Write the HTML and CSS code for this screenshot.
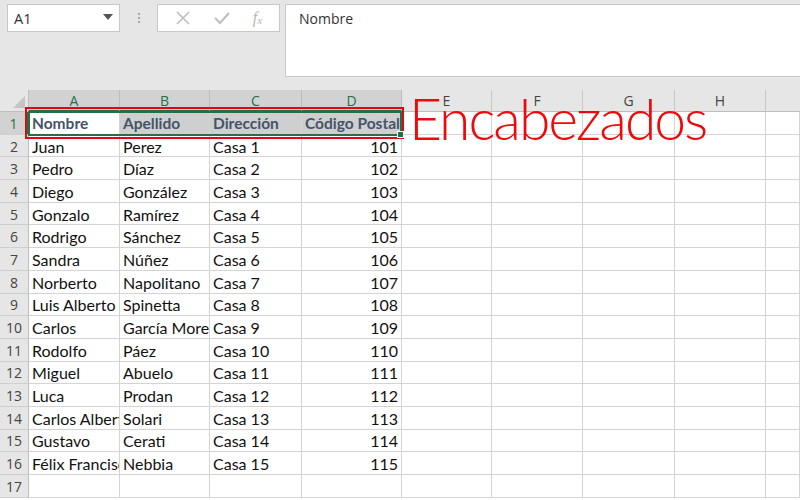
FILE: index.html
```html
<!DOCTYPE html>
<html lang="es">
<head>
<meta charset="utf-8">
<title>Encabezados</title>
<link rel="stylesheet" href="styles.css">
</head>
<body>
<div class="topbar">
  <div class="namebox"><span>A1</span><svg class="caret" width="10" height="6" viewBox="0 0 10 6"><path d="M0 0H10L5 6Z" fill="#555"/></svg></div>
  <div class="dots"><i></i><i></i><i></i></div>
  <div class="fxbox">
    <svg width="16" height="16" viewBox="0 0 16 16"><path d="M2 2L14 14M14 2L2 14" stroke="#bdbdbd" stroke-width="1.6" fill="none"/></svg>
    <svg width="18" height="16" viewBox="0 0 18 16"><path d="M2 8L7 13L16 3" stroke="#bdbdbd" stroke-width="2" fill="none"/></svg>
    <span class="fx">f<sub>x</sub></span>
  </div>
  <div class="formula">Nombre</div>
</div>
<div class="sheet">
  <div class="corner"></div><div class="ch sel">A</div><div class="ch sel">B</div><div class="ch sel">C</div><div class="ch sel">D</div><div class="ch">E</div><div class="ch">F</div><div class="ch">G</div><div class="ch">H</div><div class="ch last"></div>

  <div class="rh selr">1</div><div class="c h act">Nombre</div><div class="c h hs">Apellido</div><div class="c h hs">Dirección</div><div class="c h hs">Código Postal</div><div class="c"></div><div class="c"></div><div class="c"></div><div class="c"></div><div class="c"></div>
  <div class="rh">2</div><div class="c">Juan</div><div class="c">Perez</div><div class="c">Casa 1</div><div class="c n">101</div><div class="c"></div><div class="c"></div><div class="c"></div><div class="c"></div><div class="c"></div>
  <div class="rh">3</div><div class="c">Pedro</div><div class="c">Díaz</div><div class="c">Casa 2</div><div class="c n">102</div><div class="c"></div><div class="c"></div><div class="c"></div><div class="c"></div><div class="c"></div>
  <div class="rh">4</div><div class="c">Diego</div><div class="c">González</div><div class="c">Casa 3</div><div class="c n">103</div><div class="c"></div><div class="c"></div><div class="c"></div><div class="c"></div><div class="c"></div>
  <div class="rh">5</div><div class="c">Gonzalo</div><div class="c">Ramírez</div><div class="c">Casa 4</div><div class="c n">104</div><div class="c"></div><div class="c"></div><div class="c"></div><div class="c"></div><div class="c"></div>
  <div class="rh">6</div><div class="c">Rodrigo</div><div class="c">Sánchez</div><div class="c">Casa 5</div><div class="c n">105</div><div class="c"></div><div class="c"></div><div class="c"></div><div class="c"></div><div class="c"></div>
  <div class="rh">7</div><div class="c">Sandra</div><div class="c">Núñez</div><div class="c">Casa 6</div><div class="c n">106</div><div class="c"></div><div class="c"></div><div class="c"></div><div class="c"></div><div class="c"></div>
  <div class="rh">8</div><div class="c">Norberto</div><div class="c">Napolitano</div><div class="c">Casa 7</div><div class="c n">107</div><div class="c"></div><div class="c"></div><div class="c"></div><div class="c"></div><div class="c"></div>
  <div class="rh">9</div><div class="c">Luis Alberto</div><div class="c">Spinetta</div><div class="c">Casa 8</div><div class="c n">108</div><div class="c"></div><div class="c"></div><div class="c"></div><div class="c"></div><div class="c"></div>
  <div class="rh">10</div><div class="c">Carlos</div><div class="c">García Moreno</div><div class="c">Casa 9</div><div class="c n">109</div><div class="c"></div><div class="c"></div><div class="c"></div><div class="c"></div><div class="c"></div>
  <div class="rh">11</div><div class="c">Rodolfo</div><div class="c">Páez</div><div class="c">Casa 10</div><div class="c n">110</div><div class="c"></div><div class="c"></div><div class="c"></div><div class="c"></div><div class="c"></div>
  <div class="rh">12</div><div class="c">Miguel</div><div class="c">Abuelo</div><div class="c">Casa 11</div><div class="c n">111</div><div class="c"></div><div class="c"></div><div class="c"></div><div class="c"></div><div class="c"></div>
  <div class="rh">13</div><div class="c">Luca</div><div class="c">Prodan</div><div class="c">Casa 12</div><div class="c n">112</div><div class="c"></div><div class="c"></div><div class="c"></div><div class="c"></div><div class="c"></div>
  <div class="rh">14</div><div class="c">Carlos Alberto</div><div class="c">Solari</div><div class="c">Casa 13</div><div class="c n">113</div><div class="c"></div><div class="c"></div><div class="c"></div><div class="c"></div><div class="c"></div>
  <div class="rh">15</div><div class="c">Gustavo</div><div class="c">Cerati</div><div class="c">Casa 14</div><div class="c n">114</div><div class="c"></div><div class="c"></div><div class="c"></div><div class="c"></div><div class="c"></div>
  <div class="rh">16</div><div class="c">Félix Francisco</div><div class="c">Nebbia</div><div class="c">Casa 15</div><div class="c n">115</div><div class="c"></div><div class="c"></div><div class="c"></div><div class="c"></div><div class="c"></div>
  <div class="rh">17</div><div class="c"></div><div class="c"></div><div class="c"></div><div class="c"></div><div class="c"></div><div class="c"></div><div class="c"></div><div class="c"></div><div class="c"></div>

  <div class="redbox"></div>
  <div class="selection"><span class="handle"></span></div>
  <div class="label">Encabezados</div>
</div>
</body>
</html>
```
FILE: styles.css
```css
html, body {
  margin: 0;
  padding: 0;
  background: #ffffff;
  overflow: hidden;
}
body {
  width: 800px;
  height: 500px;
  font-family: "Lato", "Open Sans", sans-serif;
}
.topbar {
  height: 90px;
  box-sizing: border-box;
  background: #e6e6e6;
  display: flex;
  align-items: flex-start;
  padding: 4px 0 0 7px;
}
.namebox {
  width: 113px;
  height: 28px;
  box-sizing: border-box;
  background: #fff;
  border: 1px solid #c8c8c8;
  display: flex;
  align-items: center;
  justify-content: space-between;
  padding: 0 6px 0 6px;
  font-family: "Open Sans", sans-serif;
  font-size: 14.5px;
  color: #333;
}
.caret { margin-top: -2px; }
.dots {
  width: 37px;
  height: 28px;
  display: flex;
  flex-direction: column;
  align-items: center;
  justify-content: center;
  gap: 2px;
}
.dots i {
  width: 2px;
  height: 2px;
  background: #a8a8a8;
}
.fxbox {
  width: 123px;
  height: 28px;
  box-sizing: border-box;
  background: #fff;
  border: 1px solid #c8c8c8;
  display: flex;
  align-items: center;
  justify-content: space-around;
  padding: 0 6px;
}
.fx {
  font-family: "Liberation Serif", serif;
  font-style: italic;
  color: #b5b5b5;
  font-size: 16px;
}
.fx sub { font-size: 11px; vertical-align: -1px; }
.formula {
  margin-left: 5px;
  flex: 1;
  height: 73px;
  box-sizing: border-box;
  background: #fff;
  border: 1px solid #c8c8c8;
  border-right: none;
  padding: 4px 0 0 13px;
  font-family: "Open Sans", sans-serif;
  font-size: 14px;
  color: #333;
}
.sheet {
  position: relative;
  display: grid;
  grid-template-columns: 29px 91px 90px 92px 100px 90px 91px 92px 91px 1fr;
  grid-template-rows: 22px;
  grid-auto-rows: 22.7px;
  font-size: 16px;
  color: #111;
}
.corner {
  background: #e6e6e6;
  border-right: 1px solid #bdbdbd;
  border-bottom: 1px solid #bdbdbd;
  position: relative;
}
.corner::after {
  content: "";
  position: absolute;
  right: 3px;
  bottom: 3px;
  border-left: 12px solid transparent;
  border-bottom: 12px solid #c4c4c4;
}
.ch {
  background: #e6e6e6;
  border-right: 1px solid #c8c8c8;
  border-bottom: 1px solid #bdbdbd;
  display: flex;
  align-items: center;
  justify-content: center;
  font-size: 14px;
  color: #444;
  font-family: "Open Sans", sans-serif;
}
.ch.sel {
  background: #d2d2d2;
  color: #217346;
  border-right-color: #bdbdbd;
  border-bottom: 2px solid #217346;
}
.ch.last { border-right: none; }
.rh {
  background: #e6e6e6;
  border-right: 1px solid #bdbdbd;
  border-bottom: 1px solid #cfcfcf;
  display: flex;
  align-items: center;
  justify-content: center;
  font-family: "Open Sans", sans-serif;
  font-size: 14px;
  color: #444;
  padding-top: 1px;
}
.rh.selr {
  background: #d2d2d2;
  color: #217346;
  border-right: 2px solid #217346;
}
.c {
  border-right: 1px solid #d4d4d4;
  border-bottom: 1px solid #d4d4d4;
  padding: 1px 3px 0 3px;
  white-space: nowrap;
  overflow: hidden;
  display: flex;
  align-items: center;
  min-width: 0;
}
.c.n { justify-content: flex-end; }
.c.h {
  font-weight: bold;
  font-size: 15.5px;
  padding-right: 1px;
  color: #44546a;
}
.c.hs { background: #cfcfcf; }
.redbox {
  position: absolute;
  left: 25px;
  top: 17px;
  width: 379px;
  height: 32px;
  box-sizing: border-box;
  border: 2px solid #e20612;
  pointer-events: none;
}
.selection {
  position: absolute;
  left: 28px;
  top: 21px;
  width: 374px;
  height: 25px;
  box-sizing: border-box;
  border: 2px solid #217346;
}
.handle {
  position: absolute;
  right: -4px;
  bottom: -4px;
  width: 5px;
  height: 5px;
  background: #217346;
  border: 1px solid #fff;
}
.label {
  position: absolute;
  left: 409px;
  top: -2px;
  font-family: "Lato", sans-serif;
  font-weight: 300;
  font-size: 57px;
  letter-spacing: -2px;
  line-height: 60px;
  color: #ee0a0a;
  white-space: nowrap;
}
```
